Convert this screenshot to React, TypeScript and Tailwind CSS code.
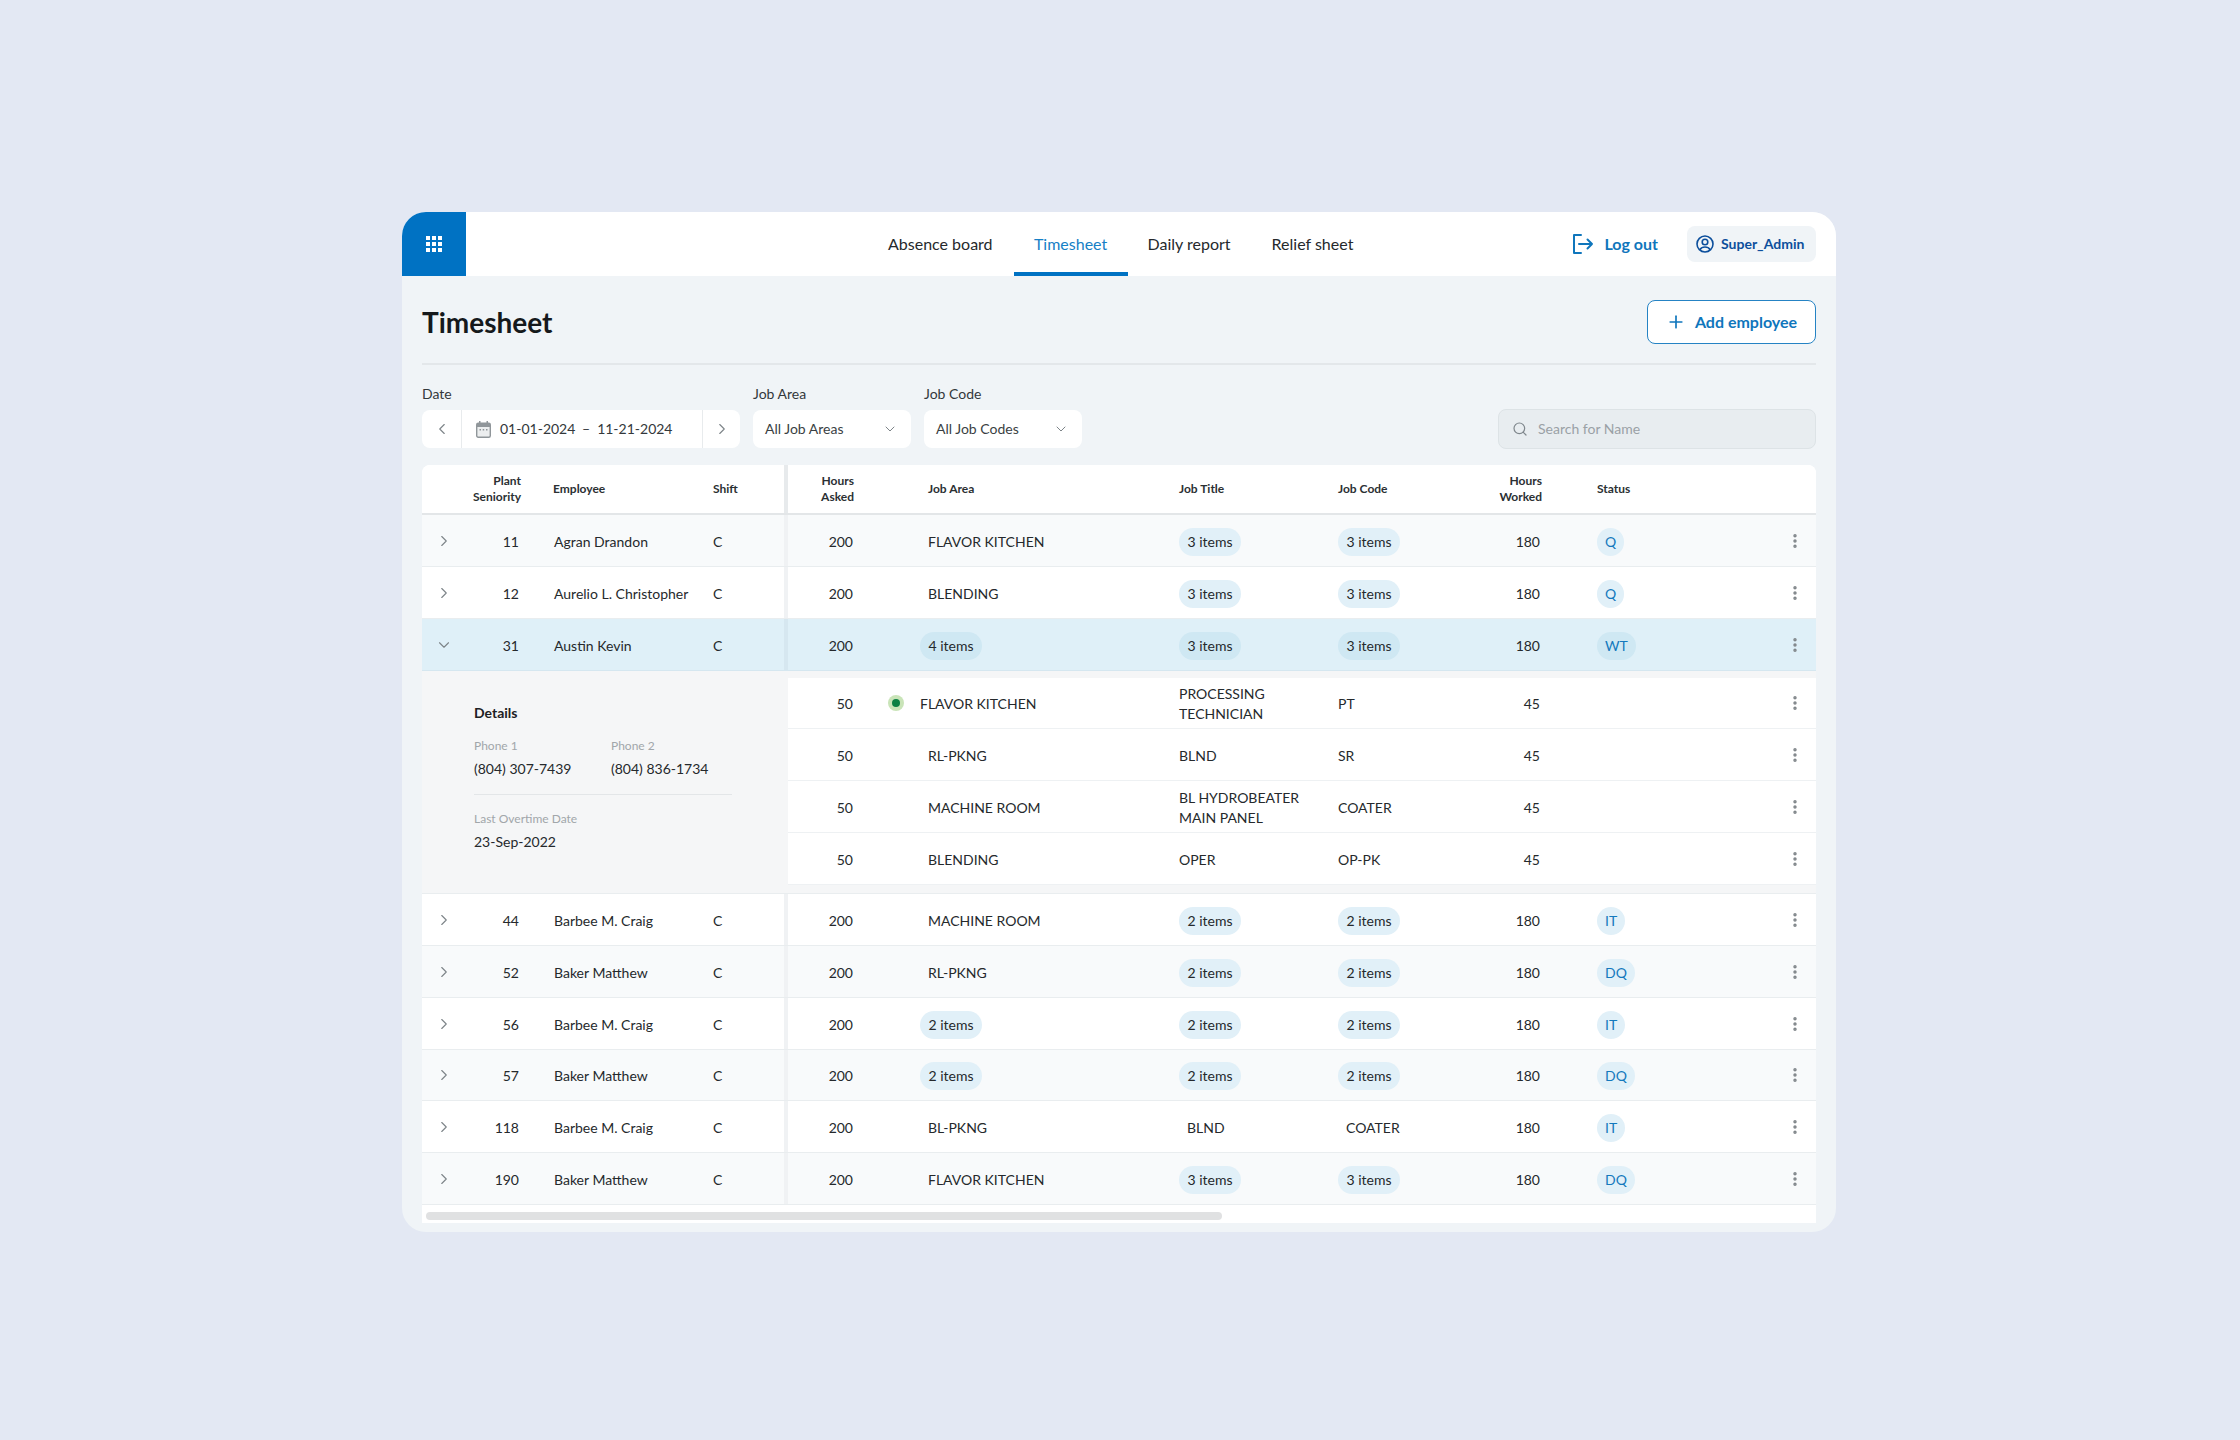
import React from "react";
import { ChevronDown, ChevronLeft, ChevronRight, EllipsisVertical, Plus, Search } from "lucide-react";

type RowData = { s: string; name: string; area: string; title: string; code: string; status: string; open?: boolean; alt?: boolean };

const rows: RowData[] = [
  { s: "11", name: "Agran Drandon", area: "FLAVOR KITCHEN", title: "3 items", code: "3 items", status: "Q", alt: true },
  { s: "12", name: "Aurelio L. Christopher", area: "BLENDING", title: "3 items", code: "3 items", status: "Q" },
  { s: "31", name: "Austin Kevin", area: "4 items", title: "3 items", code: "3 items", status: "WT", open: true },
  { s: "44", name: "Barbee M. Craig", area: "MACHINE ROOM", title: "2 items", code: "2 items", status: "IT" },
  { s: "52", name: "Baker Matthew", area: "RL-PKNG", title: "2 items", code: "2 items", status: "DQ", alt: true },
  { s: "56", name: "Barbee M. Craig", area: "2 items", title: "2 items", code: "2 items", status: "IT" },
  { s: "57", name: "Baker Matthew", area: "2 items", title: "2 items", code: "2 items", status: "DQ", alt: true },
  { s: "118", name: "Barbee M. Craig", area: "BL-PKNG", title: "BLND", code: "COATER", status: "IT" },
  { s: "190", name: "Baker Matthew", area: "FLAVOR KITCHEN", title: "3 items", code: "3 items", status: "DQ", alt: true },
];

const subRows = [
  { area: "FLAVOR KITCHEN", title: ["PROCESSING", "TECHNICIAN"], code: "PT", dot: true },
  { area: "RL-PKNG", title: ["BLND"], code: "SR" },
  { area: "MACHINE ROOM", title: ["BL HYDROBEATER", "MAIN PANEL"], code: "COATER" },
  { area: "BLENDING", title: ["OPER"], code: "OP-PK" },
];

function Cell({ value, open }: { value: string; open?: boolean }) {
  if (value.endsWith("items")) {
    return (
      <span className={`inline-flex h-7 w-[62px] items-center justify-center rounded-full ${open ? "bg-[#cfe8f3]" : "bg-[#e1f0f8]"}`}>
        {value}
      </span>
    );
  }
  return <span className="pl-2">{value}</span>;
}

function Kebab() {
  return (
    <div className="flex w-[43px] shrink-0 justify-center pb-[2px]">
      <EllipsisVertical className="h-[18px] w-[18px] text-[#80868a]" strokeWidth={2.6} />
    </div>
  );
}

function Row({ r }: { r: RowData }) {
  const bg = r.open ? "bg-[#dff0f8] border-[#d5e7f0]" : r.alt ? "bg-[#f8fafb] border-[#e9edef]" : "bg-white border-[#e9edef]";
  const sep = r.open ? "border-[#d6e7f0]" : "border-[#f0f2f4]";
  return (
    <div className={`flex h-[51.85px] items-center border-b text-[#25292c] ${bg}`}>
      <div className={`grid h-full w-[366px] shrink-0 grid-cols-[44px_53px_194px_1fr] items-center border-r-4 pt-[3px] ${sep}`}>
        <div className="flex justify-center pb-[2px]">
          {r.open ? (
            <ChevronDown className="h-[18px] w-[18px] text-[#7d8488]" strokeWidth={1.5} />
          ) : (
            <ChevronRight className="h-[18px] w-[18px] text-[#7d8488]" strokeWidth={1.5} />
          )}
        </div>
        <div className="text-right">{r.s}</div>
        <div className="pl-[35px]">{r.name}</div>
        <div>C</div>
      </div>
      <div className="flex h-full flex-1 items-center pt-[3px]">
        <div className="w-[65px] shrink-0 text-right">200</div>
        <div className="w-[326px] shrink-0 pl-[67px]">
          <Cell value={r.area} open={r.open} />
        </div>
        <div className="w-[159px] shrink-0">
          <Cell value={r.title} open={r.open} />
        </div>
        <div className="w-[142px] shrink-0">
          <Cell value={r.code} open={r.open} />
        </div>
        <div className="w-[60px] shrink-0 text-right">180</div>
        <div className="flex-1 pl-[57px]">
          <span className={`inline-flex h-7 items-center rounded-full px-2 text-[#1479bd] ${r.open ? "bg-[#cfe8f3]" : "bg-[#e1f0f8]"}`}>
            {r.status}
          </span>
        </div>
        <Kebab />
      </div>
    </div>
  );
}

function Expanded() {
  return (
    <div className="flex h-[223.5px] border-b border-[#e9edef] bg-[#f5f6f7] text-[#25292c]">
      <div className="w-[366px] shrink-0 pl-[52px] pt-8">
        <div className="font-bold leading-5 text-[#1d2124]">Details</div>
        <div className="mt-[15px] grid w-[258px] grid-cols-[137px_1fr] border-b border-[#e3e6e8] pb-[15px]">
          <div>
            <div className="text-xs leading-4 text-[#a1a6aa]">Phone 1</div>
            <div className="mt-[5px] leading-5">(804) 307-7439</div>
          </div>
          <div>
            <div className="text-xs leading-4 text-[#a1a6aa]">Phone 2</div>
            <div className="mt-[5px] leading-5">(804) 836-1734</div>
          </div>
        </div>
        <div className="mt-4 text-xs leading-4 text-[#a1a6aa]">Last Overtime Date</div>
        <div className="mt-[5px] leading-5">23-Sep-2022</div>
      </div>
      <div className="mt-[7px] flex-1 self-start bg-white">
        {subRows.map((s, i) => (
          <div key={i} className="flex h-[51.85px] items-center border-b border-[#eef1f3] pt-[3px]">
            <div className="w-[65px] shrink-0 text-right">50</div>
            <div className="flex w-[326px] shrink-0 items-center pl-[67px]">
              {s.dot ? (
                <span className="relative flex w-0 items-center">
                  <span className="absolute left-[-32px] top-[-9px] flex h-4 w-4 items-center justify-center rounded-full bg-[#c9e4b8]">
                    <span className="h-2 w-2 rounded-full bg-[#0b8043]" />
                  </span>
                </span>
              ) : null}
              <span className={s.dot ? "" : "pl-2"}>{s.area}</span>
            </div>
            <div className="w-[159px] shrink-0 leading-5">
              {s.title.map((t) => (
                <div key={t}>{t}</div>
              ))}
            </div>
            <div className="w-[142px] shrink-0">{s.code}</div>
            <div className="w-[60px] shrink-0 text-right">45</div>
            <div className="flex-1" />
            <Kebab />
          </div>
        ))}
      </div>
    </div>
  );
}

function Select({ label }: { label: string }) {
  return (
    <div className="flex h-[38px] w-[158px] items-center justify-between rounded-lg bg-white pl-3 pr-[13px] text-[#3a3f43]">
      <span>{label}</span>
      <ChevronDown className="h-4 w-4 text-[#7d8488]" strokeWidth={1.5} />
    </div>
  );
}

export default function App() {
  return (
    <div className="flex min-h-[1440px] items-start justify-center bg-[#e3e8f3] pr-[2px] pt-[212px] font-['Lato',sans-serif] text-sm">
      <div className="h-[1020px] w-[1434px] overflow-hidden rounded-3xl bg-[#f0f4f7]">
        {/* top bar */}
        <div className="flex h-16 items-center bg-white">
          <div className="flex h-full w-16 items-center justify-center bg-[#0072c3]">
            <div className="grid grid-cols-3 gap-[2px]">
              {Array.from({ length: 9 }).map((_, i) => (
                <span key={i} className="h-1 w-1 bg-white" />
              ))}
            </div>
          </div>
          <nav className="ml-[402px] flex h-full items-center text-base text-[#25292c]">
            <div className="flex h-full items-center pl-5 pr-[21px]">Absence board</div>
            <div className="flex h-full w-[114px] items-center justify-center border-b-4 border-[#0072c3] pt-1 text-[#1680c6]">Timesheet</div>
            <div className="flex h-full items-center pl-5 pr-[21px]">Daily report</div>
            <div className="flex h-full items-center pl-5">Relief sheet</div>
          </nav>
          <div className="ml-auto mr-5 flex items-center">
            <svg width="22" height="20" viewBox="0 0 22 20" fill="none" stroke="#0f76bc" strokeWidth="2" strokeLinecap="round" strokeLinejoin="round">
              <path d="M9 1H2v18h7" />
              <path d="M7 10h13M15.500 5.500 20 10l-4.500 4.500" />
            </svg>
            <span className="ml-[10px] text-base font-bold text-[#0f76bc]">Log out</span>
            <div className="ml-[29px] flex h-9 w-[129px] items-center gap-[7px] rounded-lg bg-[#f0f4f7] pl-[9px] text-sm font-bold text-[#0c4f9c]">
              <svg width="18" height="18" viewBox="0 0 18 18" fill="none" stroke="#0c4f9c" strokeWidth="1.600">
                <circle cx="9" cy="9" r="8" />
                <circle cx="9" cy="7" r="2.800" />
                <path d="M3.800 14.800C5 12.800 7 12 9 12s4 .8 5.200 2.800" />
              </svg>
              <span>Super_Admin</span>
            </div>
          </div>
        </div>

        <div className="px-5">
          {/* title */}
          <div className="flex h-[89px] items-center justify-between border-b-2 border-[#e3e7ea] pt-[5px]">
            <h1 className="text-[28px] font-bold text-[#15191c]">Timesheet</h1>
            <button className="flex h-11 w-[169px] items-center justify-center gap-[9px] rounded-lg border-[1.5px] border-[#2583c4] bg-white text-base font-bold text-[#0f76bc]">
              <Plus className="h-5 w-5" strokeWidth={2} />
              Add employee
            </button>
          </div>

          {/* filters */}
          <div className="mt-[19px] flex items-end">
            <div>
              <div className="mb-[6px] leading-5 text-[#33383b]">Date</div>
              <div className="flex h-[38px] w-[318px] items-center rounded-lg bg-white text-[#33383b]">
                <div className="flex h-full w-10 items-center justify-center border-r border-[#e8ebed]">
                  <ChevronLeft className="h-[18px] w-[18px] text-[#7d8488]" strokeWidth={1.5} />
                </div>
                <svg className="ml-[14px]" width="15" height="17" viewBox="0 0 15 17" fill="none">
                  <rect x="3" y="0" width="1.500" height="3" fill="#90969a" />
                  <rect x="10.500" y="0" width="1.500" height="3" fill="#90969a" />
                  <rect x=".7" y="2.200" width="13.600" height="14" rx="1.500" fill="#eceeef" stroke="#90969a" strokeWidth="1.400" />
                  <rect x="1" y="2.500" width="13" height="3.500" fill="#90969a" />
                  <rect x="3.500" y="8" width="1.500" height="1.500" fill="#90969a" />
                  <rect x="6.700" y="8" width="1.500" height="1.500" fill="#90969a" />
                  <rect x="10" y="8" width="1.500" height="1.500" fill="#90969a" />
                </svg>
                <span className="ml-[9px] w-[82px]">01-01-2024</span>
                <span>–</span>
                <span className="ml-[7px]">11-21-2024</span>
                <div className="ml-auto flex h-full w-[38px] items-center justify-center border-l border-[#e8ebed]">
                  <ChevronRight className="h-[18px] w-[18px] text-[#7d8488]" strokeWidth={1.5} />
                </div>
              </div>
            </div>
            <div className="ml-[13px]">
              <div className="mb-[6px] leading-5 text-[#33383b]">Job Area</div>
              <Select label="All Job Areas" />
            </div>
            <div className="ml-[13px]">
              <div className="mb-[6px] leading-5 text-[#33383b]">Job Code</div>
              <Select label="All Job Codes" />
            </div>
            <div className="ml-auto flex h-10 w-[318px] translate-y-px items-center rounded-lg border border-[#dde3e6] bg-[#e8edf0] pl-[13px] text-[#9aa1a6]">
              <Search className="h-4 w-4 text-[#7f878c]" strokeWidth={1.800} />
              <span className="ml-[10px]">Search for Name</span>
            </div>
          </div>

          {/* table */}
          <div className="mt-[17px] overflow-hidden rounded-t-lg bg-white">
            <div className="flex h-[50px] items-center border-b-2 border-[#e3e6e8] bg-white text-xs font-bold leading-4 text-[#2b3033]">
              <div className="grid h-full w-[366px] shrink-0 grid-cols-[44px_55px_192px_1fr] items-center border-r-4 border-[#e7eaec]">
                <div />
                <div className="text-right">Plant<br />Seniority</div>
                <div className="pl-8">Employee</div>
                <div>Shift</div>
              </div>
              <div className="w-[66px] shrink-0 text-right">Hours<br />Asked</div>
              <div className="w-[325px] shrink-0 pl-[74px]">Job Area</div>
              <div className="w-[159px] shrink-0">Job Title</div>
              <div className="w-[142px] shrink-0">Job Code</div>
              <div className="w-[62px] shrink-0 text-right">Hours<br />Worked</div>
              <div className="flex-1 pl-[55px]">Status</div>
            </div>
            {rows.map((r) => (
              <React.Fragment key={r.s}>
                <Row r={r} />
                {r.open ? <Expanded /> : null}
              </React.Fragment>
            ))}
            <div className="h-[18px] bg-white pl-1 pt-[7px]">
              <div className="h-2 w-[796px] rounded-full bg-[#e0e1e2]" />
            </div>
          </div>
        </div>
      </div>
    </div>
  );
}
